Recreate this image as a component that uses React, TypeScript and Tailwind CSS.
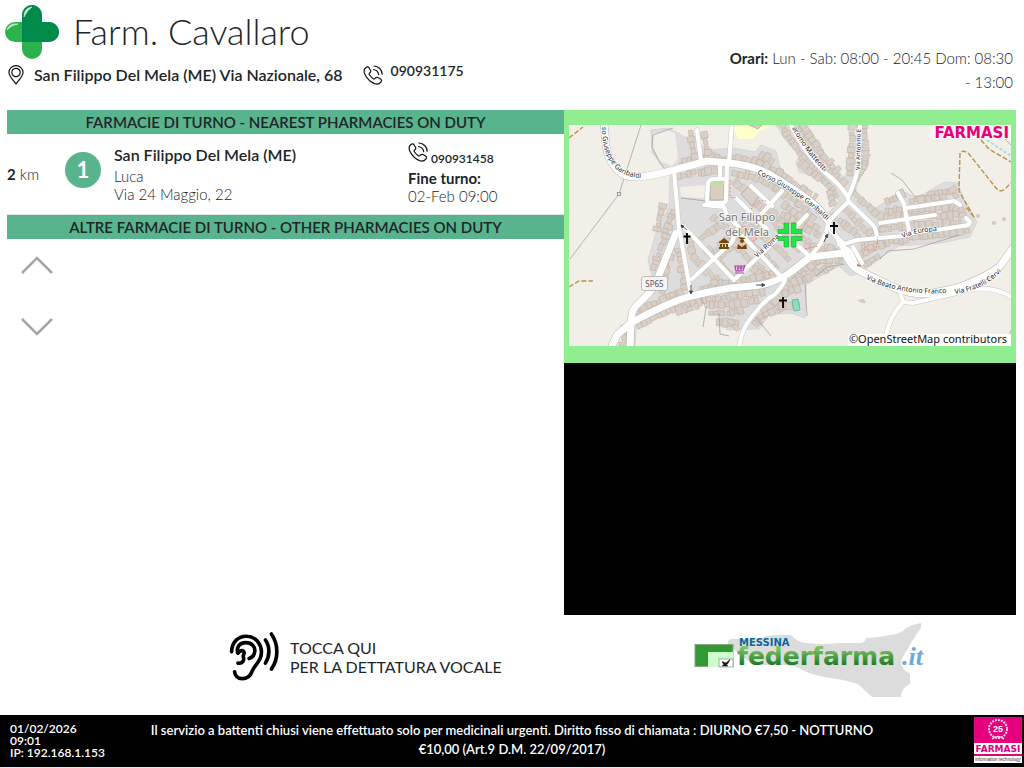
import React from "react";

type Pt = [number, number];

const mainRoads: string[] = [
  "M35 -2 L37 20 Q39 34 45 41 Q52 51 63 52 Q74 53 105 45 L138 36 L160 38 Q190 41 208 54 Q228 66 242 77 Q252 85 259 96",
  "M107 108 L90 150 Q86 162 80 168 L67 181 Q62 187 62 198 L61 223",
  "M42 223 L48 210 L62 198 Q85 185 105 177 Q120 170 162 163 L192 160 Q208 157 222 147 L241 132 L276 128 Q280 137 285 142 Q290 146 301 151 L326 163 Q345 171 364 168 L388 163 Q420 151 431 141 L444 123",
];

const streets: string[] = [
  "M105 46 L110 103 L122 170",
  "M107 110 L111 104",
  "M128 5 L132 36",
  "M163 -2 L160 38",
  "M158 40 L157 75 Q157 78 153 78 L141 78 Q138 78 138 74 L139 58 Q140 54 145 54 L157 54",
  "M151 40 L151 54",
  "M138 80 L135 80 L155 82 L158 91 L170 102",
  "M182 61 L203 81",
  "M213 66 L190 92",
  "M167 73 L198 104",
  "M114 101 L165 155 L211 111",
  "M123 154 L163 117 L168 105",
  "M174 111 L213 153",
  "M170 223 Q172 205 182 193 Q196 174 204 171 Q212 164 216 155",
  "M221 -2 Q230 17 241 31 L254 46 Q270 58 279 72",
  "M291 -2 L289 43 Q286 58 279 72 L279 77 L260 96 Q257 110 252 118 L241 132",
  "M279 76 L303 99 Q308 104 308 114",
  "M259 96 L276 128",
  "M260 104 L275 119 L288 115 L310 113 L334 111 Q352 105 368 105 L393 101 Q400 101 401 97 L397 93",
  "M311 98 L366 90",
  "M338 83 L385 76 L391 80",
  "M329 68 L335 79 L340 106",
  "M331 167 L334 177 L344 178 L388 168 Q420 157 444 173",
  "M334 177 Q320 192 317 211",
  "M224 105 L238 90",
  "M270 119 L281 126 L287 138",
  "M284 122 L293 138",
  "M241 132 L226 118",
];

const residential: string[] = [
  "M82 5 L99 3 L109 8 L140 25 L165 23 L186 27 L192 20 L207 26 L213 51 L245 74 L257 91 L270 76 L260 64 L247 52 L230 47 L227 37 L231 31 L215 13 L207 0 L238 0 L258 31 L275 53 L284 32 L290 0 L296 0 L294 25 L302 30 L291 51 L286 66 L301 86 L320 75 L332 65 L348 73 L375 57 L389 58 L396 77 L408 97 L401 112 L372 118 L330 121 L312 132 L294 147 L281 151 L270 141 L248 153 L237 160 L236 193 L222 188 L200 190 L190 204 L158 205 L152 193 L144 181 L130 175 L89 187 L67 205 L66 221 L55 221 L64 180 L86 164 L79 135 L89 101 L100 83 L101 49 L83 28 Z",
];

const buildingRows: Pt[][] = [
  [[112, 39], [142, 31], [204, 46]],
  [[110, 51], [148, 44]],
  [[122, 8], [126, 34]],
  [[135, 10], [139, 28]],
  [[165, 32], [191, 38], [212, 49], [249, 74]],
  [[193, 30], [204, 37]],
  [[166, 48], [188, 52], [207, 63], [230, 79], [249, 96]],
  [[166, 57], [207, 96]],
  [[213, 1], [231, 29], [257, 57], [269, 72]],
  [[226, 1], [241, 23], [263, 46], [276, 60]],
  [[234, 1], [252, 27], [268, 46]],
  [[232, 38], [252, 56]],
  [[260, 68], [266, 82]],
  [[284, 2], [281, 49]],
  [[295, 2], [296, 38], [287, 58]],
  [[283, 67], [318, 97], [302, 112]],
  [[274, 83], [303, 111]],
  [[265, 91], [292, 113]],
  [[318, 76], [334, 69]],
  [[343, 76], [383, 65], [389, 74]],
  [[352, 75], [380, 70]],
  [[318, 86], [383, 82], [396, 90]],
  [[317, 92], [394, 90]],
  [[314, 104], [393, 97]],
  [[294, 121], [356, 111], [402, 105]],
  [[104, 87], [96, 111], [84, 147]],
  [[93, 81], [87, 108]],
  [[101, 125], [97, 146], [92, 169]],
  [[110, 125], [117, 163]],
  [[120, 110], [125, 133], [151, 159]],
  [[139, 126], [162, 149]],
  [[133, 165], [158, 158]],
  [[146, 126], [178, 92]],
  [[153, 129], [189, 98]],
  [[134, 112], [150, 100]],
  [[145, 92], [158, 104]],
  [[170, 124], [199, 152]],
  [[178, 113], [210, 145]],
  [[191, 107], [222, 137]],
  [[185, 145], [196, 153]],
  [[205, 98], [233, 127]],
  [[205, 88], [240, 118]],
  [[214, 90], [251, 111]],
  [[216, 80], [250, 104]],
  [[145, 158], [180, 155], [209, 147]],
  [[68, 187], [103, 170], [115, 166]],
  [[70, 200], [109, 181], [164, 170], [199, 165]],
  [[110, 186], [130, 181]],
  [[139, 180], [163, 180], [188, 175]],
  [[142, 189], [163, 188], [177, 184]],
  [[150, 197], [170, 199]],
  [[162, 197], [170, 205]],
  [[187, 199], [206, 176], [228, 150], [249, 137], [275, 135]],
  [[192, 192], [213, 181], [230, 180]],
  [[216, 168], [232, 162]],
  [[222, 158], [240, 148]],
  [[231, 156], [264, 140]],
  [[238, 122], [261, 124], [290, 139]],
  [[290, 129], [316, 118]],
  [[296, 139], [312, 130]],
  [[56, 203], [54, 221]],
];

function rowBuildings(pts: Pt[], seed: number) {
  const out: { x: number; y: number; a: number; w: number; h: number; k: number }[] = [];
  let s = seed * 7919 + 17;
  const rnd = () => {
    s = (s * 1103515245 + 12345) % 2147483648;
    return s / 2147483648;
  };
  for (let i = 0; i < pts.length - 1; i++) {
    const [x1, y1] = pts[i];
    const [x2, y2] = pts[i + 1];
    const len = Math.hypot(x2 - x1, y2 - y1);
    const a = (Math.atan2(y2 - y1, x2 - x1) * 180) / Math.PI;
    let d = 0;
    while (d < len) {
      const w = 3 + rnd() * 4;
      out.push({
        x: x1 + ((x2 - x1) * d) / len,
        y: y1 + ((y2 - y1) * d) / len,
        a,
        w,
        h: 4 + rnd() * 5,
        k: rnd() * 2 - 1,
      });
      d += w + rnd();
    }
  }
  return out;
}

function TownMap() {
  return (
    <svg viewBox="0 0 442 221" className="block w-full" role="img" aria-label="San Filippo del Mela">
      <rect width="442" height="221" fill="#f2efe9" />
      <path d="M163 0 L203 0 L190 7 L184 14 L169 14 Z" fill="#ffffcc" />
      <path d="M180 0 L189 4 L193 0 Z" fill="#d9d0c9" stroke="#c4b5a8" />
      {residential.map((d) => (
        <path key={d} d={d} fill="#dddddd" stroke="#cfcfcf" strokeWidth="0.7" />
      ))}
      <path d="M84 9 L98 5 L106 8 L109 33 L103 41 L91 36 L84 23 Z" fill="#f2efe9" />
      <path d="M111 62 L137 60 L135 73 L112 72 Z" fill="#f2efe9" />
      <path d="M167 103 L176 101 L188 114 L174 122 Z" fill="#f3c5c1" stroke="#e39792" />
      <path d="M187 76 L195 70 L203 78 L195 85 L188 84 Z" fill="#dedce9" />
      {buildingRows.map((row, i) =>
        rowBuildings(row, i + 1).map((b, j) => (
          <rect
            key={`${i}-${j}`}
            x={-b.w / 2}
            y={-b.h / 2 + b.k}
            width={b.w}
            height={b.h}
            transform={`translate(${b.x} ${b.y}) rotate(${b.a})`}
            fill="#d9d0c9"
            stroke="#c2b1a4"
            strokeWidth="0.6"
          />
        )),
      )}
      <rect x="141" y="57" width="14" height="18" fill="#d9cfbf" stroke="#a5a29c" strokeWidth="0.7" />
      <rect x="141" y="56" width="14" height="4" fill="#bfe0a0" />
      <path d="M172 69 L180 61 L191 70 L183 81 Z" fill="#d9d0c9" stroke="#bba99b" />
      <path d="M223 175 L229 174 L231 185 L225 186 Z" fill="#88e0be" stroke="#6dbb9d" />
      <g fill="none" stroke="#999" strokeWidth="0.7">
        <path d="M72 0 L50 69 L1 134" />
        <path d="M104 3 L84 10 L83 22 L91 38 L100 50" />
        <path d="M112 73 L137 76 L153 83" />
        <path d="M322 48 L333 55 L347 73" />
        <path d="M132 172 L137 183 L134 202 M150 188 L151 209 L160 211" />
        <path d="M236 157 L238 191 M247 151 L258 142 L276 139 M185 190 L202 211 M436 221 L442 205" />
        <path d="M311 134 L319 126 L345 124 L390 110 M436 14 L442 20" />
      </g>
      <rect x="48.500" y="67.500" width="3" height="3" fill="#eee" stroke="#888" strokeWidth="0.8" />
      <g fill="none" stroke="#b9924a" strokeWidth="1.400" strokeDasharray="5 2">
        <path d="M0 13 L14 2" />
        <path d="M0 162 L10 156 L24 156" />
        <path d="M412 15 L420 24 L442 37" />
        <path d="M405 92 L390 66 L391 28 Q394 24 400 29 L427 63 Q431 68 436 64 L442 58" />
        <path d="M405 92 L397 82" />
      </g>
      <path d="M418 15 L442 31" stroke="#a6d9ea" strokeWidth="2" strokeDasharray="3 2" />
      <g fill="#d4c8bf">
        <circle cx="425" cy="98" r="2" />
        <circle cx="435" cy="94" r="2" />
        <circle cx="409" cy="91" r="2" />
        <path d="M288 175 L295 174 L297 178 L293 178 Z" />
      </g>

      <g fill="none" strokeLinejoin="round" strokeLinecap="round">
        {streets.map((d) => (
          <path key={`sc${d}`} d={d} stroke="#c4c0bb" strokeWidth="5" />
        ))}
        {mainRoads.map((d) => (
          <path key={`mc${d}`} d={d} stroke="#b9b5b0" strokeWidth="8" />
        ))}
        {streets.map((d) => (
          <path key={`s${d}`} d={d} stroke="#fff" strokeWidth="4.200" />
        ))}
        {mainRoads.map((d) => (
          <path key={`m${d}`} d={d} stroke="#fff" strokeWidth="7" />
        ))}
      </g>

      <g fill="none" stroke="#f08079" strokeWidth="1" strokeDasharray="2 1.500">
        <path d="M161 55 L161 72 L168 73" />
        <path d="M182 84 L192 75 L197 76" />
        <path d="M236 124 L249 121 M295 125 L307 125 L309 112" />
      </g>
      <path d="M288 139 L292 140 L291 142 L288 141 Z" fill="#f26b62" />

      <defs>
        <path id="st-garibaldi-w" d="M33 2 Q33 27 44 40 Q52 53 82 54" />
        <path id="st-garibaldi-e" d="M188 49 Q231 68 262 100" />
        <path id="st-matteotti" d="M223 3 Q234 25 262 54" />
        <path id="st-antonino" d="M291 45 L292 -4" />
        <path id="st-europa" d="M334 113 Q350 106 374 106" />
        <path id="st-franco" d="M297 154 Q335 173 390 167" />
        <path id="st-cervi" d="M386 169 Q417 165 438 141" />
        <path id="st-roma" d="M188 133 L224 100" />
      </defs>
      <g fill="#222" stroke="#fff" strokeWidth="1.400" paintOrder="stroke" fontSize="7" className="font-['Noto_Sans']">
        <text><textPath href="#st-garibaldi-w">so Giuseppe Garibaldi</textPath></text>
        <text><textPath href="#st-garibaldi-e">Corso Giuseppe Garibaldi</textPath></text>
        <text><textPath href="#st-matteotti">acomo Matteotti</textPath></text>
        <text fontSize="6"><textPath href="#st-antonino">Via Antonino E</textPath></text>
        <text><textPath href="#st-europa">Via Europa</textPath></text>
        <text><textPath href="#st-franco">Via Beato Antonio Franco</textPath></text>
        <text><textPath href="#st-cervi">Via Fratelli Cervi</textPath></text>
        <text><textPath href="#st-roma">Via Roma</textPath></text>
      </g>
      <g
        fill="#777"
        stroke="#f5f3f0"
        strokeWidth="2"
        paintOrder="stroke"
        fontSize="11"
        textAnchor="middle"
        className="font-['Noto_Sans']"
      >
        <text x="178" y="96">San Filippo</text>
        <text x="178" y="111">del Mela</text>
      </g>
      <rect x="72.500" y="151.500" width="26" height="14" rx="2" fill="#f4f4f4" stroke="#bbb" />
      <text x="85.500" y="161.500" fontSize="8" fill="#555" textAnchor="middle" className="font-['Noto_Sans']">
        SP65
      </text>

      <g stroke="#000" strokeWidth="1.800">
        <path d="M118 108 V119 M114.500 111.500 H121.500" />
        <path d="M265 97 V109 M261 101 H269" />
        <path d="M214 172 V183 M210 175.500 H218" />
      </g>
      <g stroke="#444" strokeWidth="0.9" fill="#444">
        <path d="M122 160 V168 M120.500 166 L122 169 L123.500 166 Z" />
        <path d="M187 160 H194 M193 158.500 L196 160 L193 161.500 Z" />
        <path d="M112 100 L118 105 M112 100 L115 101 L113 103 Z" />
        <path d="M255 117 L258 110 M256 111 L259 109 L258 113 Z" />
      </g>
      <g fill="#734a08">
        <path d="M150 117 L155 113 L160 117 V118 H150 Z M151 119 H153 V122 H151 Z M154 119 H156 V122 H154 Z M157 119 H159 V122 H157 Z M150 122 H160 V124 H150 Z" />
        <circle cx="173" cy="116" r="2" />
        <path d="M168 124 L169 119 L173 122 L177 119 L178 124 Z M169 112 L177 113 L175 114 H171 Z" />
      </g>
      <g fill="none" stroke="#ac39ac" strokeWidth="1.200">
        <path d="M176 140 L174 146 H167 L166 141 H175 M168 143 H174 M166 148 H175" />
        <path d="M169 141 V146 M172 141 V146" />
      </g>

      <g fill="#1fe645" stroke="#12a82f" strokeWidth="0.6">
        <path d="M215 98 H219.500 V108.500 H209 V104.500 H215 Z" />
        <path d="M222.500 98 H227 V104.500 H233 V108.500 H222.500 Z" />
        <path d="M209 111.500 H219.500 V122 H215 V115.500 H209 Z" />
        <path d="M222.500 111.500 H233 V115.500 H227 V122 H222.500 Z" />
      </g>

      <rect x="361" y="0" width="81" height="14" fill="#f9f5f5" />
      <text x="440" y="13" fontSize="15" fontWeight="700" fill="#e6007e" textAnchor="end" className="font-['DejaVu_Sans']">
        FARMASI
      </text>
      <rect x="279" y="209" width="163" height="12" fill="#fff" fillOpacity="0.9" />
      <text x="438" y="218" fontSize="11" fill="#111" textAnchor="end" className="font-['Noto_Sans']">
        ©OpenStreetMap contributors
      </text>
    </svg>
  );
}

function PharmacyCross() {
  return (
    <svg viewBox="0 0 54 54" className="h-[54px] w-[54px] shrink-0" aria-hidden="true">
      <rect x="17" y="0" width="20" height="54" rx="10" fill="#2bb24c" />
      <rect x="0" y="17" width="54" height="20" rx="10" fill="#2bb24c" />
      <path d="M17 37 V10 A10 10 0 0 1 37 10 V17 H44 A10 10 0 0 1 44 37 Z" fill="#008a4b" />
      <path d="M2 25 Q4 18 13 19 Q6 20 2 25 Z" fill="#d9f5df" stroke="#d9f5df" strokeWidth="0.6" />
      <path d="M19 12 Q19 3 27 2 Q22 5 19 12 Z" fill="#d9f5e5" stroke="#d9f5e5" strokeWidth="0.6" />
    </svg>
  );
}

function PinIcon() {
  return (
    <svg viewBox="0 0 16 20" className="h-5 w-4 shrink-0" fill="none" stroke="#111" strokeWidth="1.200" aria-hidden="true">
      <path d="M8 19 C6 16 1 11.500 1 7.500 A7 6.800 0 0 1 15 7.500 C15 11.500 10 16 8 19 Z" />
      <circle cx="8" cy="7.500" r="4.200" />
    </svg>
  );
}

function PhoneIcon() {
  return (
    <svg viewBox="0 0 20 20" className="h-5 w-5 shrink-0" fill="none" stroke="#111" strokeWidth="1.200" strokeLinecap="round" strokeLinejoin="round" aria-hidden="true">
      <path d="M3 2.500 C1 4 .5 6.500 2 9.500 C4 13.500 7.500 17 11.500 18.600 C14 19.500 16.500 18.800 18 16.800 C18.900 15.700 18.500 14.600 17.500 14 L15 12.600 C14 12 13.200 12.200 12.500 13 C11.800 14 11 14.200 10 13.500 C8.500 12.500 7.300 11.200 6.400 9.800 C5.900 9 6.100 8.300 6.900 7.700 C7.900 7 8 6.200 7.500 5.300 L6 2.800 C5.300 1.700 4.200 1.700 3 2.500 Z" />
      <path d="M10.500 4.500 C13.500 5 15.300 7 15.700 9.700 M11 1 C15.500 1.300 19 4.700 19.200 9.200" />
    </svg>
  );
}

function EarIcon() {
  return (
    <svg viewBox="28 34 154 152" className="h-[51px] w-[51px] shrink-0" fill="none" stroke="#000" strokeWidth="11" strokeLinecap="round" aria-hidden="true">
      <path d="M36 96 C36 68 55 49 80 49 C107 49 126 70 126 97 C126 126 105 134 98 154 C92 171 82 177 68 177 C54 177 46 168 45 156" />
      <path d="M54 98 C50 79 62 68 79 68 C97 68 107 80 106 94 C105 106 97 113 89 116" />
      <path d="M55 100 C64 86 79 93 72 105 C67 112 76 112 72 121 C69 129 62 131 55 130" />
      <path d="M138 60 C152 80 152 108 138 130" />
      <path d="M156 42 C178 74 178 117 156 148" />
    </svg>
  );
}

function FederfarmaLogo() {
  return (
    <svg viewBox="0 0 240 76" className="h-[76px] w-[240px] shrink-0" role="img" aria-label="Messina federfarma.it">
      <defs>
        <linearGradient id="ff-green" x1="0" y1="0" x2="0" y2="1">
          <stop offset="0.2" stopColor="#7cc463" />
          <stop offset="0.8" stopColor="#1e7a24" />
        </linearGradient>
      </defs>
      <path
        d="M34 18 Q37 15 45 16 Q60 18 72 13 Q86 11 97 12 Q103 19 112 20 Q128 22 145 20 L164 20 Q171 21 172 15 Q184 15 196 12 Q207 11 212 5 Q219 1 227 0 V5 Q221 13 216 22 Q209 33 207 39 Q207 46 216 51 Q216 58 216 61 Q207 65 207 74 L178 74 Q169 66 164 61 Q148 56 130 54 Q111 50 105 45 Q99 42 90 42 L60 42 Q45 31 34 22 Z"
        fill="#dcdcdc"
      />
      <rect x="1" y="21.500" width="38" height="22" fill="#339933" stroke="#8aa78a" />
      <rect x="14" y="29" width="25" height="15" fill="#ccffcc" />
      <rect x="25" y="36" width="14" height="8" fill="#fff" stroke="#888" strokeWidth="0.7" />
      <path d="M28 38.500 L32 40 L36 36.500 L34 40.500 L32 42 L34 43 H28 L30 42 Z" fill="#111" stroke="#111" strokeWidth="0.5" />
      <text x="45" y="23" fontSize="10" fontWeight="700" fill="#0b669c" className="font-['DejaVu_Sans']">
        MESSINA
      </text>
      <text x="43" y="42" fontSize="25" fontWeight="700" fill="url(#ff-green)" className="font-['DejaVu_Sans']">
        federfarma
      </text>
      <text x="208" y="42" fontSize="26" fontStyle="italic" fontWeight="700" fill="#6fa8dc" className="font-['Liberation_Serif']">
        .it
      </text>
    </svg>
  );
}

function FarmasiBadge() {
  return (
    <svg viewBox="0 0 48 46" className="h-[46px] w-12 shrink-0" role="img" aria-label="Farmasi information technology">
      <rect width="48" height="46" fill="#e6007e" />
      <circle cx="24" cy="12" r="9" fill="none" stroke="#fbd0e6" strokeWidth="2" strokeDasharray="2 1" />
      <path d="M18 22 Q24 17 30 22" fill="none" stroke="#fbd0e6" strokeWidth="1.500" />
      <text x="24" y="15" fontSize="9" fill="#fff" textAnchor="middle" className="font-['Liberation_Sans']">
        25
      </text>
      <rect y="26" width="48" height="20" fill="#fff" />
      <text x="24" y="35" fontSize="9" fontWeight="700" fill="#e6007e" textAnchor="middle" className="font-['DejaVu_Sans']">
        FARMASI
      </text>
      <rect y="37" width="48" height="2" fill="#e6007e" />
      <text x="24" y="44" fontSize="4.500" fill="#333" textAnchor="middle" className="font-['Liberation_Sans'] font-normal">
        information technology
      </text>
    </svg>
  );
}

function Chevron({ up }: { up?: boolean }) {
  return (
    <svg viewBox="0 0 32 18" className="h-[18px] w-8" fill="none" stroke="#a6a6a6" strokeWidth="2.500" aria-hidden="true">
      <path d={up ? "M1 17 L16 2 L31 17" : "M1 1 L16 16 L31 1"} />
    </svg>
  );
}

export default function App() {
  return (
    <div className="flex min-h-screen flex-col bg-white font-['Lato',sans-serif] text-[#212529]">
      <header className="flex h-[110px] justify-between pr-[11px] pl-[5px]">
        <div className="pt-[5px]">
          <div className="flex items-start gap-[14px]">
            <PharmacyCross />
            <h1 className="text-[36px] leading-[52px] font-light">Farm. Cavallaro</h1>
          </div>
          <div className="flex items-center pl-[3px] text-[16px] leading-6 font-semibold">
            <PinIcon />
            <span className="ml-[10px]">San Filippo Del Mela (ME) Via Nazionale, 68</span>
            <span className="ml-5 flex items-center gap-2">
              <PhoneIcon />
              <span className="pb-2 text-[14px]">090931175</span>
            </span>
          </div>
        </div>
        <p className="w-[290px] pt-[46px] text-right text-[15px] leading-6 font-light">
          <b className="font-bold">Orari:</b> Lun - Sab: 08:00 - 20:45 Dom: 08:30 - 13:00
        </p>
      </header>

      <main className="grid grid-cols-[557fr_452fr] pr-2 pl-[7px]">
        <section>
          <h2 className="bg-[#57b48d] text-center text-[15px] leading-6 font-semibold">
            FARMACIE DI TURNO - NEAREST PHARMACIES ON DUTY
          </h2>
          <article className="flex h-[81px] border-b border-[#dee2e6] text-[15px] leading-[18px] font-light">
            <div className="flex w-[58px] items-center">
              <span>
                <b className="font-bold">2</b> km
              </span>
            </div>
            <div className="w-[49px] pt-[18px]">
              <span className="flex size-9 items-center justify-center rounded-full bg-[#57b48d] text-[22px] font-bold text-white">
                1
              </span>
            </div>
            <div className="w-[294px] pt-3">
              <h3 className="pb-[3px] text-[16px] font-semibold">San Filippo Del Mela (ME)</h3>
              <p>Luca</p>
              <p>Via 24 Maggio, 22</p>
            </div>
            <div className="pt-2">
              <p className="flex items-start gap-[3px] text-[12px] font-semibold">
                <PhoneIcon />
                <span className="pt-2">090931458</span>
              </p>
              <p className="pt-px font-bold">Fine turno:</p>
              <p>02-Feb 09:00</p>
            </div>
          </article>
          <h2 className="bg-[#57b48d] text-center text-[15px] leading-6 font-semibold">
            ALTRE FARMACIE DI TURNO - OTHER PHARMACIES ON DUTY
          </h2>
          <div className="ml-[14px] flex w-8 flex-col gap-11 pt-[17px]">
            <button type="button" aria-label="Su" className="block">
              <Chevron up />
            </button>
            <button type="button" aria-label="Giù" className="block">
              <Chevron />
            </button>
          </div>
        </section>
        <section>
          <div className="bg-[#90ee90] px-[5px] pt-[15px] pb-[17px]">
            <TownMap />
          </div>
          <div className="h-[252px] bg-black" />
        </section>
      </main>

      <div className="flex grow items-start justify-between pt-2 pr-[90px] pl-[229px]">
        <button type="button" className="flex items-center gap-[10px] pt-2 text-left text-[16px] leading-[19px]">
          <EarIcon />
          <span>
            TOCCA QUI
            <br />
            PER LA DETTATURA VOCALE
          </span>
        </button>
        <FederfarmaLogo />
      </div>

      <footer className="flex h-[53px] items-start justify-between border-b border-[#e5e5e5] bg-black px-[2px] text-[12px] font-semibold text-white">
        <div className="w-[140px] pt-2 pl-2 leading-3">
          <p>01/02/2026</p>
          <p>09:01</p>
          <p>IP: 192.168.1.153</p>
        </div>
        <p className="w-[730px] pt-[6px] text-center text-[13px] leading-[19px]">
          Il servizio a battenti chiusi viene effettuato solo per medicinali urgenti. Diritto fisso di chiamata : DIURNO €7,50 - NOTTURNO €10,00 (Art.9 D.M. 22/09/2017)
        </p>
        <div className="flex w-[140px] justify-end pt-[2px]">
          <FarmasiBadge />
        </div>
      </footer>
    </div>
  );
}
